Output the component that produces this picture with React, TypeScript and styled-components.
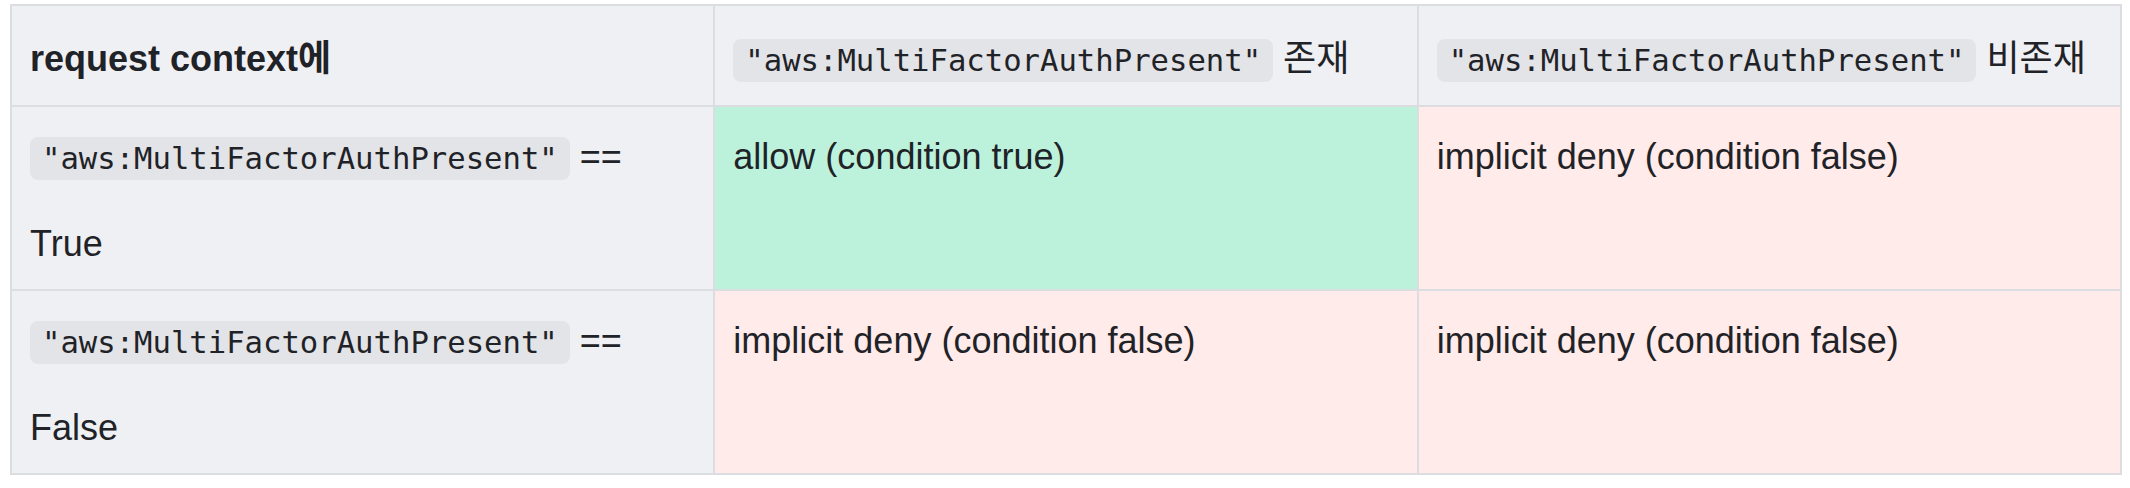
import React from "react";
import styled, { createGlobalStyle } from "styled-components";

const Global = createGlobalStyle`
  html, body { margin: 0; padding: 0; background: #ffffff; }
  body { font-family: "Liberation Sans", Arial, "Noto Sans CJK KR", sans-serif; color: #1f2328; }
`;

const Page = styled.div`
  padding: 4px 8px 0 10px;
`;

const Table = styled.table`
  width: 2112px;
  table-layout: fixed;
  border-collapse: collapse;
  font-size: 36px;
  line-height: 87px;
`;

type Tone = "gray" | "green" | "pink";
const tones: Record<Tone, string> = {
  gray: "#eff0f3",
  green: "#bcf2dc",
  pink: "#ffebe9",
};

const Cell = styled.td<{ $tone: Tone }>`
  border: 2px solid #dcdde0;
  padding: 6px 18px 2px;
  vertical-align: top;
  text-align: left;
  font-weight: 400;
  background: ${(p) => tones[p.$tone]};
`;

const HeadCell = styled(Cell).attrs({ as: "th" })`
  padding: 9px 18px 3px;
`;

const Strong = styled.strong`
  font-weight: 700;
  line-height: 1;
`;

const Korean = styled.span`
  line-height: 1;
`;

const Code = styled.code`
  font-family: "DejaVu Sans Mono", "Liberation Mono", monospace;
  font-size: 30.6px;
  line-height: 1;
  padding: 4px 12px;
  background: #e3e4e7;
  border-radius: 8px;
`;

const KEY = '"aws:MultiFactorAuthPresent"';

export default function App() {
  return (
    <>
      <Global />
      <Page>
        <Table>
          <thead>
            <tr>
              <HeadCell $tone="gray">
                <Strong>request context에</Strong>
              </HeadCell>
              <HeadCell $tone="gray">
                <Code>{KEY}</Code> <Korean>존재</Korean>
              </HeadCell>
              <HeadCell $tone="gray">
                <Code>{KEY}</Code> <Korean>비존재</Korean>
              </HeadCell>
            </tr>
          </thead>
          <tbody>
            <tr>
              <Cell $tone="gray">
                <Code>{KEY}</Code> == True
              </Cell>
              <Cell $tone="green">allow (condition true)</Cell>
              <Cell $tone="pink">implicit deny (condition false)</Cell>
            </tr>
            <tr>
              <Cell $tone="gray">
                <Code>{KEY}</Code> == False
              </Cell>
              <Cell $tone="pink">implicit deny (condition false)</Cell>
              <Cell $tone="pink">implicit deny (condition false)</Cell>
            </tr>
          </tbody>
        </Table>
      </Page>
    </>
  );
}
